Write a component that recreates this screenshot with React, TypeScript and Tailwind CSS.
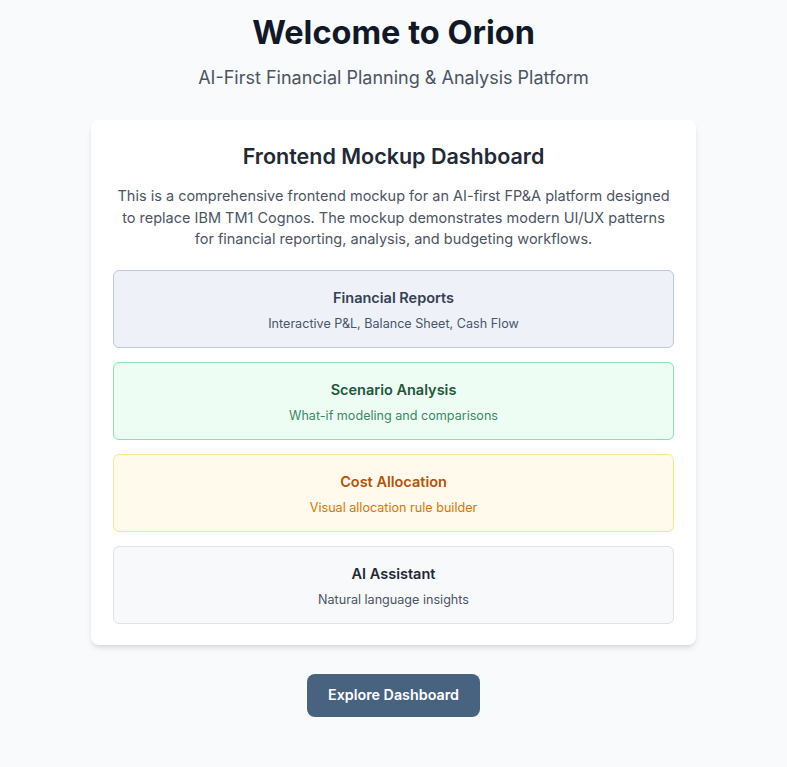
export default function App() {
  const items = [
    { t: "Financial Reports", s: "Interactive P&L, Balance Sheet, Cash Flow", box: "bg-[#eef2f8] border-[#bccbdd]", tc: "text-[#334155]", sc: "text-[#475569]" },
    { t: "Scenario Analysis", s: "What-if modeling and comparisons", box: "bg-[#edfdf3] border-[#8fe0ad]", tc: "text-[#24563d]", sc: "text-[#3b8a63]" },
    { t: "Cost Allocation", s: "Visual allocation rule builder", box: "bg-[#fffaeb] border-[#fde58f]", tc: "text-[#b45309]", sc: "text-[#d97706]" },
    { t: "AI Assistant", s: "Natural language insights", box: "bg-[#f8f9fb] border-[#e0e3e9]", tc: "text-[#1f2937]", sc: "text-[#4b5563]" },
  ];
  return (
    <div className="min-h-[767px] bg-[#f8fafc] flex flex-col items-center pt-[12px]" style={{ fontFamily: "Inter, 'Noto Sans', sans-serif" }}>
      <h1 className="text-[32.5px] leading-[42px] font-bold text-[#111827]">Welcome to Orion</h1>
      <p className="mt-[11px] text-[18px] leading-[26px] text-[#4b5563]">AI-First Financial Planning &amp; Analysis Platform</p>
      <div className="mt-[29px] w-[605px] bg-white rounded-lg shadow-md px-[22px] pt-[22px] pb-[21px]">
        <h2 className="text-center text-[21.5px] leading-[28px] font-semibold text-[#1f2937]">Frontend Mockup Dashboard</h2>
        <p className="mt-[15px] text-center text-[14.5px] leading-[21.5px] text-[#4b5563]">
          This is a comprehensive frontend mockup for an AI-first FP&amp;A platform designed to replace IBM TM1 Cognos. The mockup demonstrates modern UI/UX patterns for financial reporting, analysis, and budgeting workflows.
        </p>
        <div className="mt-[20px] flex flex-col gap-[14px]">
          {items.map((it) => (
            <div key={it.t} className={`border rounded-md h-[78px] pt-[4px] flex flex-col items-center justify-center ${it.box}`}>
              <div className={`text-[14.5px] leading-[20px] font-semibold ${it.tc}`}>{it.t}</div>
              <div className={`mt-[7px] text-[12.6px] leading-[18px] ${it.sc}`}>{it.s}</div>
            </div>
          ))}
        </div>
      </div>
      <button className="mt-[29px] w-[173px] h-[43px] rounded-lg bg-[#47637f] text-white text-[14.3px] font-semibold">Explore Dashboard</button>
    </div>
  );
}
